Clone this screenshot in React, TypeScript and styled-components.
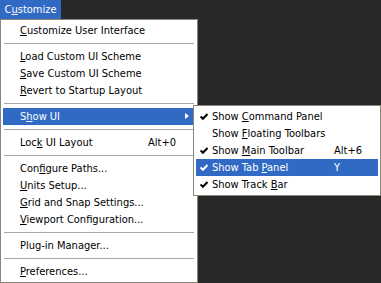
import React from "react";
import styled, { createGlobalStyle, css } from "styled-components";

const Global = createGlobalStyle`
  html, body { margin: 0; padding: 0; background: #282828; }
  body { width: 381px; height: 283px; overflow: hidden; font-family: Tahoma, "DejaVu Sans Condensed", "Liberation Sans", sans-serif; font-size: 11px; }
`;

const Screen = styled.div`
  position: relative;
  width: 381px;
  height: 283px;
  background: #282828;
`;

const MenuBar = styled.div`
  display: flex;
  height: 19px;
`;

const BarItem = styled.div`
  width: 61px;
  height: 19px;
  line-height: 19px;
  text-align: center;
  color: #fff;
  background: #316ac5;
`;

const Menu = styled.div`
  position: absolute;
  left: 0;
  top: 19px;
  width: 192px;
  height: 258px;
  padding: 2px;
  background: #fff;
  border: 1px solid #8a867a;
  display: flex;
  flex-direction: column;
`;

const SubMenu = styled.div`
  position: absolute;
  left: 190px;
  top: -3px;
  width: 182px;
  padding: 2px;
  background: #fff;
  border: 1px solid #8a867a;
  display: flex;
  flex-direction: column;
  z-index: 2;
`;

const Row = styled.div<{ $active?: boolean; $sub?: boolean }>`
  position: relative;
  display: flex;
  align-items: center;
  height: 17px;
  line-height: 17px;
  padding-left: ${(p) => (p.$sub ? 16 : 17)}px;
  color: #000;
  white-space: nowrap;
  ${(p) =>
    p.$active &&
    css`
      background: #316ac5;
      color: #fff;
    `}
`;

const Label = styled.span<{ $w?: number }>`
  flex: ${(p) => (p.$w ? "none" : "1")};
  width: ${(p) => (p.$w ? `${p.$w}px` : "auto")};
`;

const Shortcut = styled.span<{ $right?: number }>`
  margin-right: ${(p) => p.$right ?? 0}px;
`;

const Check = styled.svg`
  position: absolute;
  left: 4px;
  top: 5px;
`;

const Arrow = styled.span`
  position: absolute;
  right: 6px;
  top: 5px;
  width: 0;
  height: 0;
  border-top: 3.5px solid transparent;
  border-bottom: 3.5px solid transparent;
  border-left: 4px solid #fff;
`;

const Sep = styled.div`
  height: 9px;
  display: flex;
  align-items: center;
  padding: 0 1px;
  &::after {
    content: "";
    flex: 1;
    height: 1px;
    background: #a6a6a6;
  }
`;

const U = styled.span`
  text-decoration: underline;
  text-underline-offset: 1px;
`;

const CheckMark = ({ color }: { color: string }) => (
  <Check width="8" height="7" viewBox="0 0 8 7">
    <path d="M0.6 3.4 L2.9 5.8 L7.5 1" stroke={color} strokeWidth="2" fill="none" />
  </Check>
);

export default function App() {
  return (
    <>
      <Global />
      <Screen>
        <MenuBar>
          <BarItem>
            C<U>u</U>stomize
          </BarItem>
        </MenuBar>
        <Menu>
          <Row>
            <Label>
              <U>C</U>ustomize User Interface
            </Label>
          </Row>
          <Sep />
          <Row>
            <Label>
              <U>L</U>oad Custom UI Scheme
            </Label>
          </Row>
          <Row>
            <Label>
              <U>S</U>ave Custom UI Scheme
            </Label>
          </Row>
          <Row>
            <Label>
              <U>R</U>evert to Startup Layout
            </Label>
          </Row>
          <Sep />
          <Row $active>
            <Label>
              S<U>h</U>ow UI
            </Label>
            <Arrow />
            <SubMenu>
              <Row $sub>
                <CheckMark color="#000" />
                <Label $w={122}>
                  Show <U>C</U>ommand Panel
                </Label>
              </Row>
              <Row $sub>
                <Label $w={122}>
                  Show <U>F</U>loating Toolbars
                </Label>
              </Row>
              <Row $sub>
                <CheckMark color="#000" />
                <Label $w={122}>
                  Show <U>M</U>ain Toolbar
                </Label>
                <Shortcut>Alt+6</Shortcut>
              </Row>
              <Row $sub $active>
                <CheckMark color="#fff" />
                <Label $w={122}>
                  Show Tab <U>P</U>anel
                </Label>
                <Shortcut>Y</Shortcut>
              </Row>
              <Row $sub>
                <CheckMark color="#000" />
                <Label $w={122}>
                  Show Track <U>B</U>ar
                </Label>
              </Row>
            </SubMenu>
          </Row>
          <Sep />
          <Row>
            <Label>
              Loc<U>k</U> UI Layout
            </Label>
            <Shortcut $right={19}>Alt+0</Shortcut>
          </Row>
          <Sep />
          <Row>
            <Label>
              Con<U>f</U>igure Paths...
            </Label>
          </Row>
          <Row>
            <Label>
              <U>U</U>nits Setup...
            </Label>
          </Row>
          <Row>
            <Label>
              <U>G</U>rid and Snap Settings...
            </Label>
          </Row>
          <Row>
            <Label>
              <U>V</U>iewport Configuration...
            </Label>
          </Row>
          <Sep />
          <Row>
            <Label>Plug-in Manager...</Label>
          </Row>
          <Sep />
          <Row>
            <Label>
              <U>P</U>references...
            </Label>
          </Row>
        </Menu>
      </Screen>
    </>
  );
}
